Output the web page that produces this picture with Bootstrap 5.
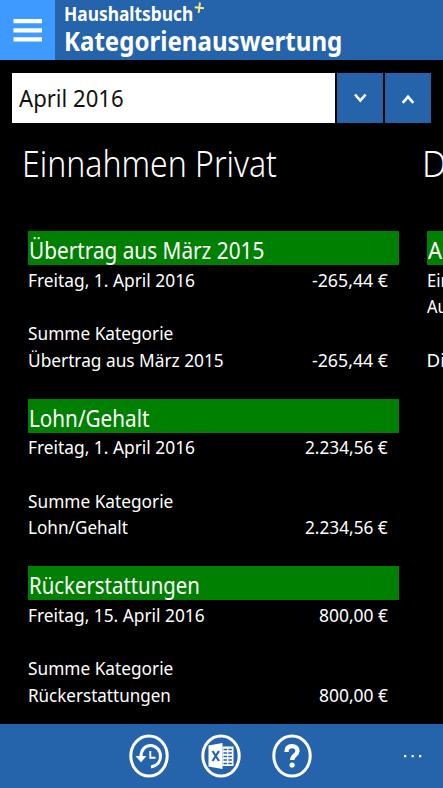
<!DOCTYPE html>
<html lang="de">
<head>
  <meta charset="UTF-8" />
  <meta name="viewport" content="width=device-width, initial-scale=1.0"/>
  <title>Haushaltsbuch+ Kategorienauswertung</title>
  <link href="https://cdn.jsdelivr.net/npm/bootstrap@5.3.3/dist/css/bootstrap.min.css" rel="stylesheet">
  <style>
    body {
      height: 788px;
      background: #000;
      color: #fff;
      font-family: "Noto Sans", "Open Sans", sans-serif;
      font-size: 18.7px;
      line-height: 26.7px;
    }
    .bar-blue { background: #2563aa; }
    .top-bar { height: 60px; }
    .menu-btn { width: 55px; background: #3f9aff; }
    .title-box { padding-left: 9px; }
    .app-name { font-size: 18.7px; line-height: 28px; height: 27px; }
    .app-name svg { margin: 2px 0 0 1px; }
    .page-name { font-size: 26.5px; line-height: 28px; }
    .month-row { height: 50px; margin: 13px 12px 0; gap: 2px; }
    .month-field { color: #111; font-size: 24px; padding: 1px 0 0 7px; }
    .step-btn { width: 46px; }
    .fit { display: inline-block; white-space: nowrap; transform-origin: left; }
    .fit-end { transform-origin: right; }
    .pivot { width: 421.5px; padding: 0 22.5px 0 22px; }
    .pivot-title { height: 108px; padding-top: 15px; font-size: 37.5px; line-height: 50px; font-weight: 300; }
    .pivot .booking { margin-left: 6px; }
    .booking { height: 167.7px; }
    .booking-head { background: #008000; height: 34px; line-height: 34px; padding: 2px 0 0 1px; margin-bottom: 1.5px; font-size: 23.6px; }
    .booking-body { padding-right: 11px; }
    .line-row { height: 26.7px; }
    .next-pivot { width: 21px; }
    .next-pivot .booking { width: 120px; margin-left: 5px; }
    .app-bar { height: 64.5px; padding-left: 129px; }
    .app-bar-icons { gap: 31.5px; padding-top: 10px; }
    .more-dots { margin: 30px 20px 0 0; }
  </style>
</head>
<body class="d-flex flex-column overflow-hidden">
  <header class="top-bar bar-blue d-flex flex-shrink-0">
    <div class="menu-btn">
      <svg class="d-block" width="55" height="60" fill="#fff"><path d="M13.500 19h28.500v4.300H13.500zM13.500 28.200h28.500v4.300H13.500zM13.500 37.200h28.500v4.300H13.500z"/></svg>
    </div>
    <div class="title-box fw-bold">
      <div class="app-name d-flex">
        <span class="fit" data-w="129">Haushaltsbuch</span>
        <svg width="11" height="12" viewBox="0 0 11 12" fill="none" stroke="#fbe983" stroke-width="1.9"><path d="M6 .5 4.6 11M.7 5.3l9.3.9"/></svg>
      </div>
      <div class="page-name"><span class="fit" data-w="278">Kategorienauswertung</span></div>
    </div>
  </header>

  <div class="month-row d-flex flex-shrink-0">
    <div class="month-field bg-white flex-grow-1 d-flex align-items-center"><span class="fit" data-w="105">April 2016</span></div>
    <div class="step-btn bar-blue">
      <svg class="d-block" width="46" height="50" fill="none" stroke="#fff" stroke-width="2.6"><path d="m18 21.500 5.300 6 5.300-6"/></svg>
    </div>
    <div class="step-btn bar-blue">
      <svg class="d-block" width="46" height="50" fill="none" stroke="#fff" stroke-width="2.6"><path d="m17.700 29.800 5.300-6 5.300 6"/></svg>
    </div>
  </div>

  <main class="d-flex flex-grow-1 overflow-hidden">
    <section class="pivot flex-shrink-0">
      <div class="pivot-title"><span class="fit" data-w="255">Einnahmen Privat</span></div>

      <div class="booking">
        <div class="booking-head"><span class="fit" data-w="235">Übertrag aus März 2015</span></div>
        <div class="booking-body">
          <div class="line-row d-flex justify-content-between">
            <span class="fit" data-w="167">Freitag, 1. April 2016</span>
            <span class="fit fit-end" data-w="76">-265,44 €</span>
          </div>
          <div class="line-row"></div>
          <div class="line-row"><span class="fit" data-w="145">Summe Kategorie</span></div>
          <div class="line-row d-flex justify-content-between">
            <span class="fit" data-w="196">Übertrag aus März 2015</span>
            <span class="fit fit-end" data-w="76">-265,44 €</span>
          </div>
        </div>
      </div>

      <div class="booking">
        <div class="booking-head"><span class="fit" data-w="120">Lohn/Gehalt</span></div>
        <div class="booking-body">
          <div class="line-row d-flex justify-content-between">
            <span class="fit" data-w="167">Freitag, 1. April 2016</span>
            <span class="fit fit-end" data-w="83">2.234,56 €</span>
          </div>
          <div class="line-row"></div>
          <div class="line-row"><span class="fit" data-w="145">Summe Kategorie</span></div>
          <div class="line-row d-flex justify-content-between">
            <span class="fit" data-w="100">Lohn/Gehalt</span>
            <span class="fit fit-end" data-w="83">2.234,56 €</span>
          </div>
        </div>
      </div>

      <div class="booking">
        <div class="booking-head"><span class="fit" data-w="171">Rückerstattungen</span></div>
        <div class="booking-body">
          <div class="line-row d-flex justify-content-between">
            <span class="fit" data-w="177">Freitag, 15. April 2016</span>
            <span class="fit fit-end" data-w="69">800,00 €</span>
          </div>
          <div class="line-row"></div>
          <div class="line-row"><span class="fit" data-w="145">Summe Kategorie</span></div>
          <div class="line-row d-flex justify-content-between">
            <span class="fit" data-w="143">Rückerstattungen</span>
            <span class="fit fit-end" data-w="69">800,00 €</span>
          </div>
        </div>
      </div>
    </section>

    <!-- next pivot page, peeking in from the right -->
    <section class="next-pivot flex-grow-1">
      <div class="pivot-title"><span class="fit" data-w="25">D</span></div>
      <div class="booking">
        <div class="booking-head"><span class="fit" data-w="14">A</span></div>
        <div class="line-row"><span class="fit" data-w="24">Ein</span></div>
        <div class="line-row"><span class="fit" data-w="21">Au</span></div>
        <div class="line-row"></div>
        <div class="line-row"><span class="fit" data-w="18">Di</span></div>
      </div>
    </section>
  </main>

  <footer class="app-bar bar-blue d-flex justify-content-between flex-shrink-0">
    <div class="app-bar-icons d-flex">
      <svg width="40" height="44" viewBox="0 0 40 44" fill="none" stroke="#fff">
        <ellipse cx="20" cy="22" rx="18.2" ry="20" stroke-width="3"/>
        <path d="M12 22.500c0-6.500 4-11 9.500-11s10 4.800 10 10.500c0 5.700-3.500 10-9.500 11" stroke-width="3"/>
        <path d="M6.500 22h11l-5.500 6.200z" fill="#fff" stroke="none"/>
        <path d="M21.300 17v6.800h5.200" stroke-width="1.900"/>
      </svg>
      <svg width="40" height="44" viewBox="0 0 40 44">
        <ellipse cx="20" cy="22" rx="18.2" ry="20" fill="none" stroke="#fff" stroke-width="3"/>
        <path d="M7.500 11.500 21.500 9v26L7.500 32.500z" fill="#fff"/>
        <path d="M21.500 12.500h11v19.500h-11" fill="#fff"/>
        <path d="M22.500 15.500h9M22.500 19h9M22.500 22.500h9M22.500 26h9M22.500 29.500h9" stroke="#2563aa" stroke-width="1.3" stroke-dasharray="3.600 1.200"/>
        <path d="m11.500 17 6.500 10M18 17l-6.500 10" stroke="#2563aa" stroke-width="2.2"/>
      </svg>
      <svg width="40" height="44" viewBox="0 0 40 44" fill="none" stroke="#fff">
        <ellipse cx="20" cy="22" rx="18.2" ry="20" stroke-width="3"/>
        <path d="M14.500 18c0-4 2.200-5.800 5.500-5.800s5.500 1.800 5.500 4.800c0 4.200-5.300 4.200-5.300 9" stroke-width="4.300"/>
        <circle cx="20.100" cy="31" r="2.600" fill="#fff" stroke="none"/>
      </svg>
    </div>
    <svg class="more-dots" width="20" height="5" fill="#fff"><path d="M1 1h2.300v2.300H1zM8.500 1h2.300v2.300H8.500zM16 1h2.300v2.300H16z"/></svg>
  </footer>

<script src="https://cdn.jsdelivr.net/npm/bootstrap@5.3.3/dist/js/bootstrap.bundle.min.js"></script>
<script>
  document.querySelectorAll(".fit").forEach((el) => {
    let natural = el.offsetWidth;
    el.style.transform = `scaleX(${el.dataset.w / natural})`;
    if (!el.classList.contains("fit-end")) {
      el.style.marginRight = `${el.dataset.w - natural}px`;
    }
  });
</script>
</body>
</html>
